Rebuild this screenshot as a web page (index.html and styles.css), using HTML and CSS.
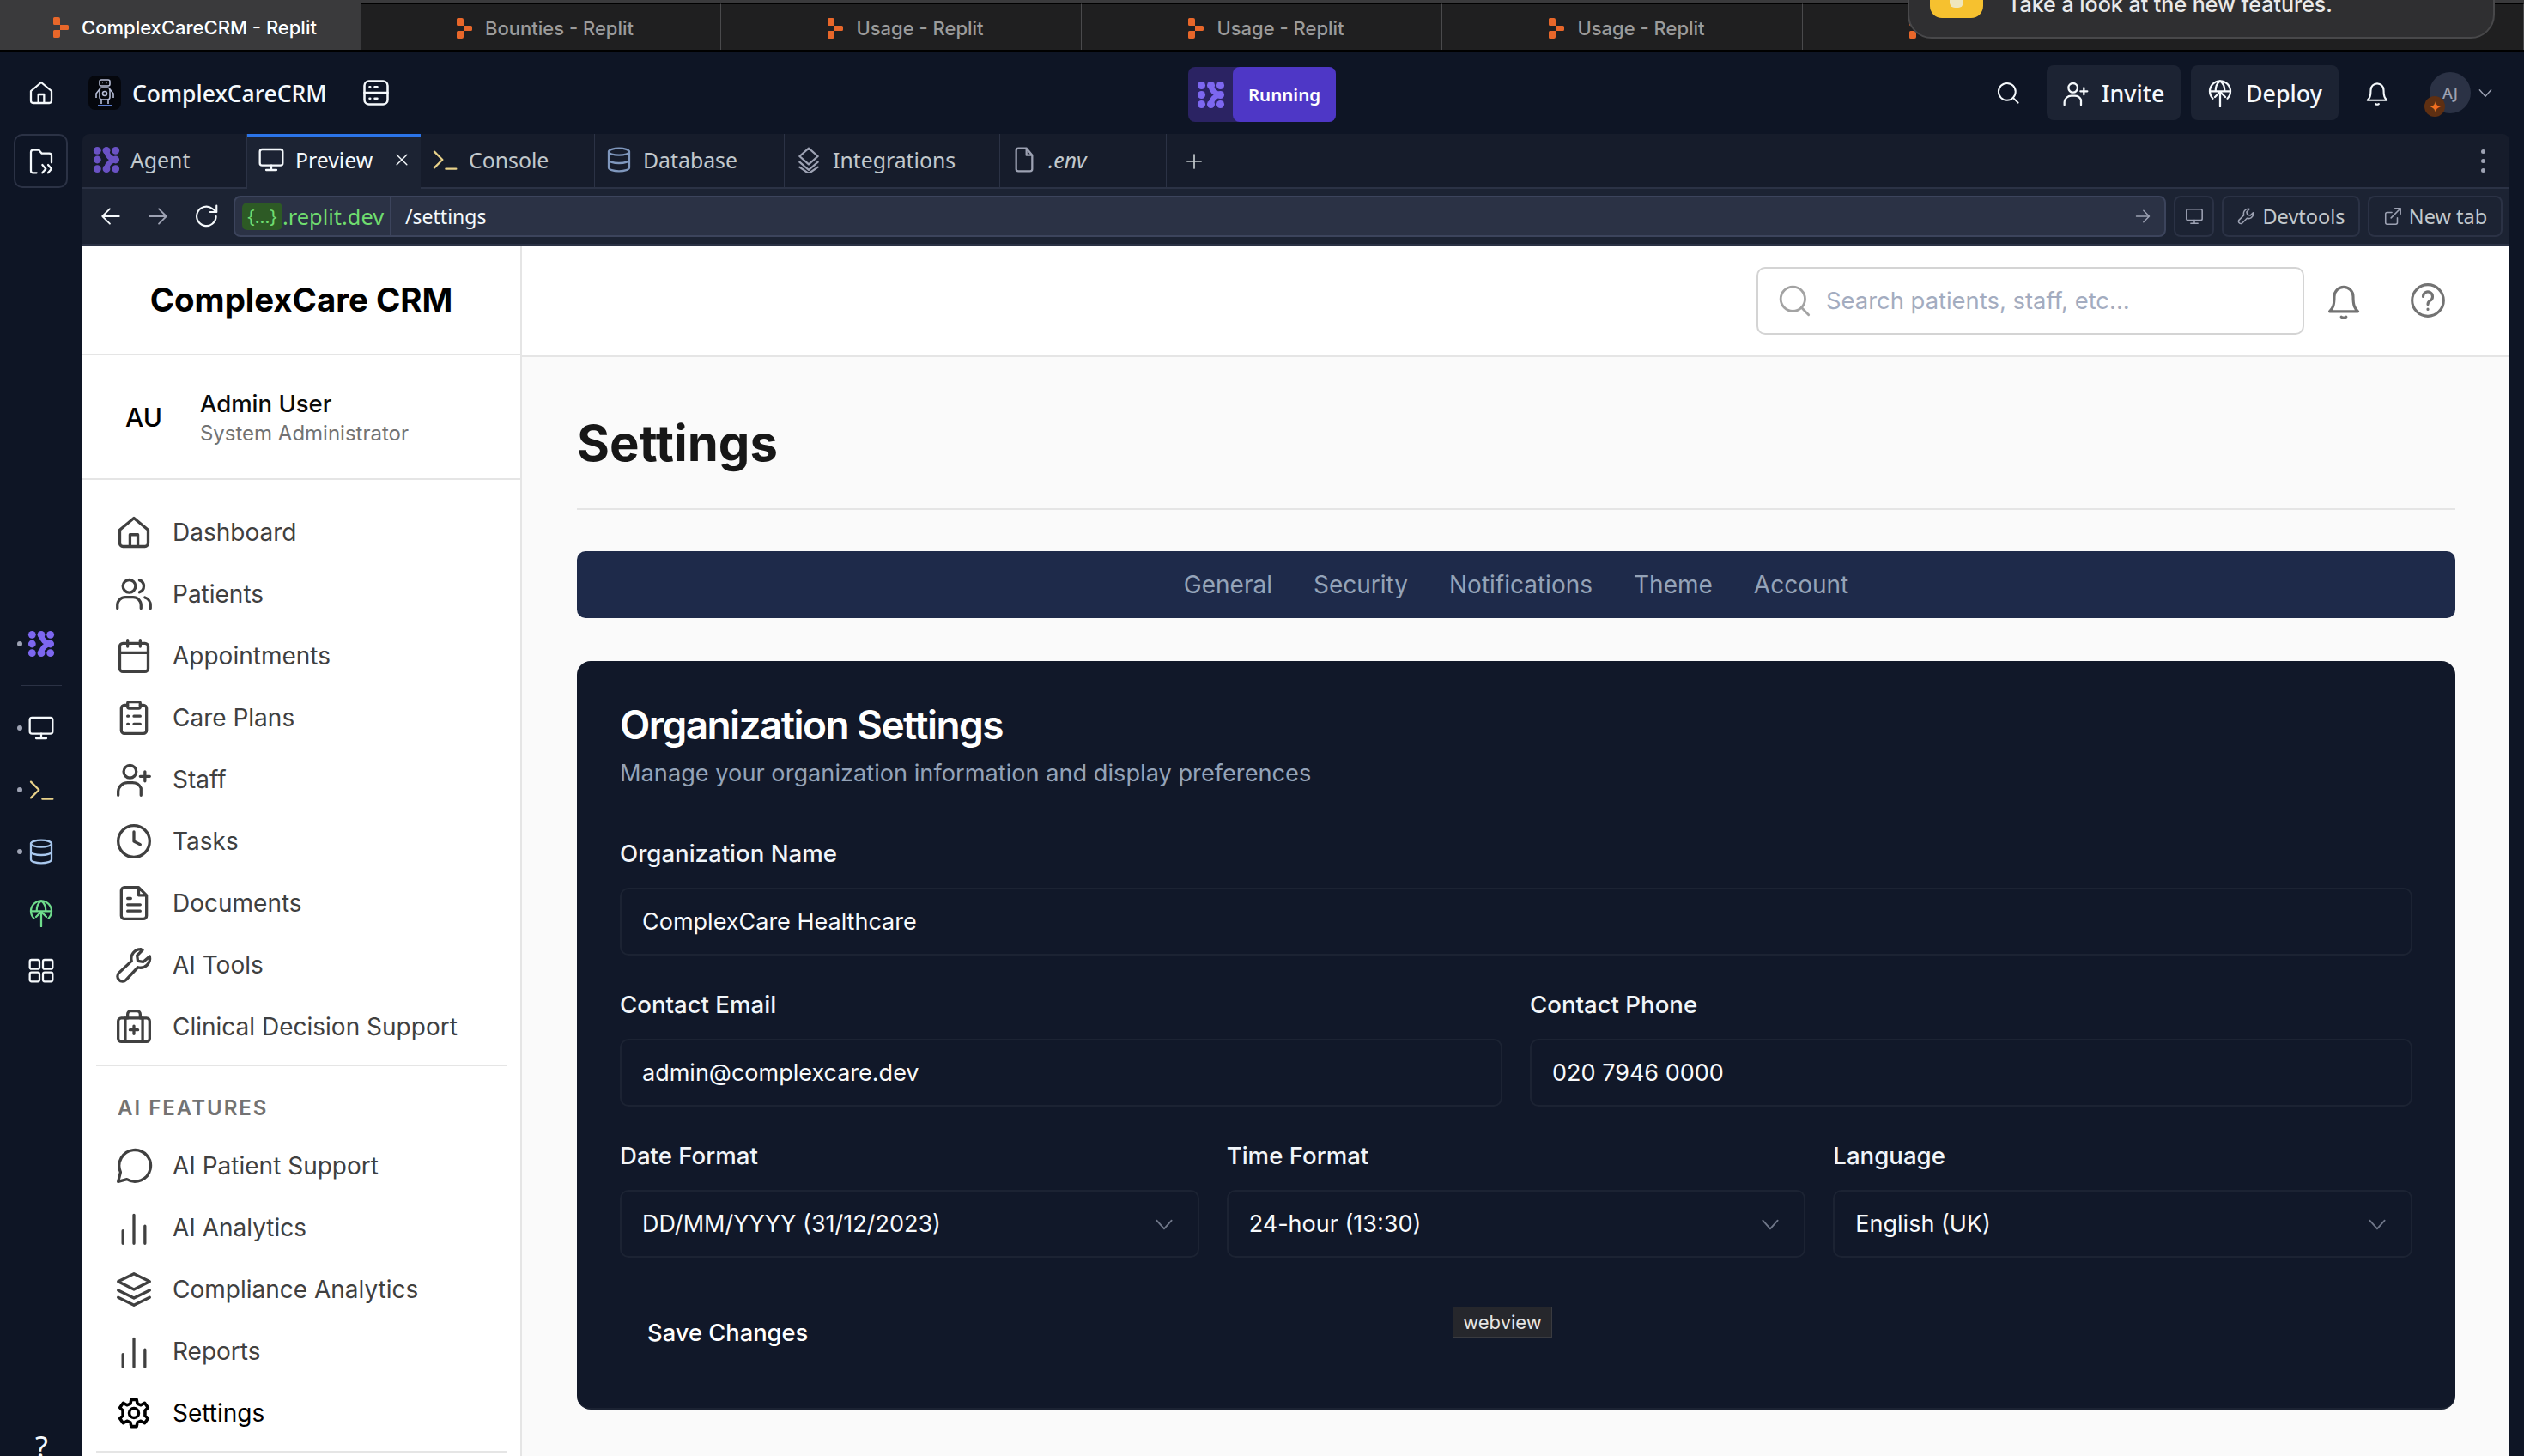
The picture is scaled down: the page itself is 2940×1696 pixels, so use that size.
FILE: index.html
```html
<!DOCTYPE html>
<html lang="en">
<head>
    <meta charset="UTF-8">
    <title>ComplexCareCRM - Replit</title>
    <link rel="stylesheet" href="styles.css">
</head>
<body>
    <svg class="sprite" width="0" height="0">
        <symbol id="i-replit" viewBox="0 0 20 24"><path fill="#e8672a" d="M1 1.500Q1 0 2.500 0H7q2 0 2 2v7H2.500Q1 9 1 7.500zM9 9h8.500Q19 9 19 10.500v3q0 1.500-1.500 1.500H9zM1 16.500Q1 15 2.500 15H9v7q0 2-2 2H2.500Q1 24 1 22.500z"/></symbol>
        <symbol id="i-agent" viewBox="0 0 24 24"><g fill="currentColor"><circle cx="4" cy="4" r="3.300"/><circle cx="12" cy="4" r="3.300"/><circle cx="20" cy="4" r="3.300"/><circle cx="4" cy="12" r="3.300"/><circle cx="20" cy="12" r="3.300"/><circle cx="4" cy="20" r="3.300"/><circle cx="12" cy="20" r="3.300"/><circle cx="20" cy="20" r="3.300"/></g><path fill="none" stroke="currentColor" stroke-width="4.600" stroke-linecap="round" d="M12 4C12.500 8 15 11 20 12 15 13 12.500 16 12 20"/></symbol>
        <symbol id="i-home" viewBox="0 0 24 24"><path d="M3 10.500 12 3l9 7.500V19a2 2 0 0 1-2 2H5a2 2 0 0 1-2-2zM9.500 21v-7.500h5V21"/></symbol>
        <symbol id="i-server" viewBox="0 0 24 24"><rect x="3" y="3" width="18" height="18" rx="3.500"/><path d="M3 12h18M7 7.500h.5M11 7.500h2M7 16.500h.5M11 16.500h2"/></symbol>
        <symbol id="i-search" viewBox="0 0 24 24"><circle cx="11" cy="11" r="8.500"/><path d="m17 17 5 5"/></symbol>
        <symbol id="i-invite" viewBox="0 0 24 24"><circle cx="9.500" cy="7" r="4"/><path d="M2 22v-2.500A6 6 0 0 1 8 14h3a6 6 0 0 1 5.500 3.500V22M19 7v6M16 10h6"/></symbol>
        <symbol id="i-deploy" viewBox="0 0 24 24"><path d="M5.600 16.300A9 9 0 1 1 18.400 16.300M3 10h18M12 1C9 3 8 6 8 10M12 1c3 2 4 5 4 9M12 23.500V10.500M7.500 15 12 10.500l4.500 4.500"/></symbol>
        <symbol id="i-bell" viewBox="0 0 24 24"><path d="M6 9.500a6 6 0 0 1 12 0c0 6 1 7.500 3 9.500H3c2-2 3-3.500 3-9.500zM10.500 22.500c1 .7 2 .7 3 0"/></symbol>
        <symbol id="i-files" viewBox="0 0 24 24"><path d="M8 22H5a2 2 0 0 1-2-2V4a2 2 0 0 1 2-2h5l2.500 3H19a2 2 0 0 1 2 2v6M13 15l3 3.500-3 3.500M18 15l3 3.500-3 3.500"/></symbol>
        <symbol id="i-monitor" viewBox="0 0 24 24"><rect x="2" y="3" width="20" height="14" rx="2"/><path d="M12 17v4M7.500 21h9"/></symbol>
        <symbol id="i-console" viewBox="0 0 24 24"><path stroke="#e9d28a" d="m3 5 7 7-7 7"/><path stroke="#e9d28a" d="M13 20h9"/></symbol>
        <symbol id="i-db" viewBox="0 0 24 24"><ellipse cx="12" cy="5" rx="9" ry="3"/><path d="M3 5v14c0 1.700 4 3 9 3s9-1.300 9-3V5M3 12c0 1.700 4 3 9 3s9-1.300 9-3"/></symbol>
        <symbol id="i-layers" viewBox="0 0 24 24"><path d="m12 2 8 7-8 7-8-7zM4 14l8 7 8-7M4 18.500l8 5.500 8-5.500"/></symbol>
        <symbol id="i-file" viewBox="0 0 24 24"><path d="M14 2H7a2 2 0 0 0-2 2v16a2 2 0 0 0 2 2h10a2 2 0 0 0 2-2V8zM14 2v6h5"/></symbol>
        <symbol id="i-plus" viewBox="0 0 24 24"><path d="M12 4v16M4 12h16"/></symbol>
        <symbol id="i-x" viewBox="0 0 24 24"><path d="m5 5 14 14M19 5 5 19"/></symbol>
        <symbol id="i-back" viewBox="0 0 24 24"><path d="M21 12H3M11 4l-8 8 8 8"/></symbol>
        <symbol id="i-next" viewBox="0 0 24 24"><path d="M3 12h18M13 4l8 8-8 8"/></symbol>
        <symbol id="i-reload" viewBox="0 0 24 24"><path d="M20.500 12A9 9 0 1 1 17 4.800L21 8M21 2v6h-6"/></symbol>
        <symbol id="i-wrench" viewBox="0 0 24 24"><path d="M15 2.500a6 6 0 0 0-5.500 8L3 17a3 3 0 0 0 4 4l6.500-6.500a6 6 0 0 0 8-5.500l-.3-1.500-3.700 3.500-3.500-1-1-3.500L16.500 2.700z"/></symbol>
        <symbol id="i-external" viewBox="0 0 24 24"><path d="M18 14v6a2 2 0 0 1-2 2H5a2 2 0 0 1-2-2V9a2 2 0 0 1 2-2h6M15 2h7v7M22 2 10 14"/></symbol>
        <symbol id="i-chevron" viewBox="0 0 24 24"><path d="m4 8 8 9 8-9"/></symbol>
        <symbol id="i-help" viewBox="0 0 24 24"><circle cx="12" cy="12" r="10"/><path d="M9 9.500a3 3 0 1 1 4.500 2.600c-1 .6-1.500 1.200-1.500 2.400M12 17.500v.2"/></symbol>
        <symbol id="i-users" viewBox="0 0 24 24"><circle cx="9" cy="7" r="4"/><path d="M1.500 21v-2a5 5 0 0 1 5-5h5a5 5 0 0 1 5 5v2M15.500 3.200a4 4 0 0 1 0 7.600M19 14.200a5 5 0 0 1 3.500 4.800v2"/></symbol>
        <symbol id="i-calendar" viewBox="0 0 24 24"><rect x="3" y="4" width="18" height="18" rx="2"/><path d="M3 10h18M8 2v4M16 2v4"/></symbol>
        <symbol id="i-clipboard" viewBox="0 0 24 24"><path d="M8 4H6a2 2 0 0 0-2 2v14a2 2 0 0 0 2 2h12a2 2 0 0 0 2-2V6a2 2 0 0 0-2-2h-2"/><rect x="8" y="2" width="8" height="4" rx="1"/><path d="M8 11h.5M8 16h.5M12 11h4M12 16h4"/></symbol>
        <symbol id="i-clock" viewBox="0 0 24 24"><circle cx="12" cy="12" r="10"/><path d="M12 6v6l4 2"/></symbol>
        <symbol id="i-doc" viewBox="0 0 24 24"><path d="M15 2H6a2 2 0 0 0-2 2v16a2 2 0 0 0 2 2h12a2 2 0 0 0 2-2V7zM15 2v5h5M8 9h2M8 13h8M8 17h8"/></symbol>
        <symbol id="i-tool" viewBox="0 0 24 24"><path d="M16.500 2a6 6 0 0 0-6 7.500L2.500 17a3 3 0 0 0 4.500 4.500l7.500-8a6 6 0 0 0 7.500-7l-4 3.500-3.500-.5-.5-3.500 3.500-3.500a6 6 0 0 0-1.500-.5z"/></symbol>
        <symbol id="i-case" viewBox="0 0 24 24"><rect x="2" y="6.500" width="20" height="15" rx="2"/><path d="M6.500 21.500v-15M17.500 21.500v-15M8 6.500V4a2 2 0 0 1 2-2h4a2 2 0 0 1 2 2v2.500M12 11.500v5M9.500 14h5"/></symbol>
        <symbol id="i-chat" viewBox="0 0 24 24"><path d="M3.500 16A10 10 0 1 1 7.500 20.500L2 22z"/></symbol>
        <symbol id="i-bars" viewBox="0 0 24 24"><path d="M5 22v-8M12 22V4M19 22V11"/></symbol>
        <symbol id="i-stack" viewBox="0 0 24 24"><path d="m12 2 10 5-10 5L2 7zM2 12.500 12 17.500l10-5M2 17l10 5 10-5"/></symbol>
        <symbol id="i-gear" viewBox="0 0 24 24"><g transform="translate(1.800 1.800) scale(.85)"><circle cx="12" cy="12" r="3.500"/><path d="M10 2h4l.6 3 2.600 1.100L20 4.500 22.500 8l-2.200 2.100v3.800l2.200 2.100L20 19.500l-2.800-1.600-2.600 1.100-.6 3h-4l-.6-3-2.600-1.100L4 19.500 1.500 16l2.200-2.100v-3.800L1.500 8 4 4.500l2.800 1.600L9.400 5z"/></g></symbol>
        <symbol id="i-grid" viewBox="0 0 24 24"><rect x="2" y="3" width="8.500" height="8" rx="1.500"/><rect x="13.500" y="3" width="8.500" height="8" rx="1.500"/><rect x="2" y="14" width="8.500" height="8" rx="1.500"/><rect x="13.500" y="14" width="8.500" height="8" rx="1.500"/></symbol>
    </svg>

    <div class="toast">
        <span class="toast-icon"><i class="toast-bulb"></i></span>
        <span>Take a look at the new features.</span>
    </div>

    <div class="browser-tabs">
        <div class="browser-tab active"><svg class="fav"><use href="#i-replit"/></svg>ComplexCareCRM - Replit</div>
        <div class="browser-tab"><svg class="fav"><use href="#i-replit"/></svg>Bounties - Replit</div>
        <div class="browser-tab"><svg class="fav"><use href="#i-replit"/></svg>Usage - Replit</div>
        <div class="browser-tab"><svg class="fav"><use href="#i-replit"/></svg>Usage - Replit</div>
        <div class="browser-tab"><svg class="fav"><use href="#i-replit"/></svg>Usage - Replit</div>
        <div class="browser-tab"><svg class="fav"><use href="#i-replit"/></svg>Usage - Replit</div>
        <div class="browser-tab"></div>
    </div>

    <header class="repl-top">
        <div class="repl-left">
            <svg class="ic home-ic"><use href="#i-home"/></svg>
            <span class="repl-avatar">
                <svg viewBox="0 0 38 40" width="38" height="40"><g fill="none" stroke="#b6bdd6" stroke-width="1.600"><rect x="13" y="5" width="12" height="7" rx="2"/><path d="M16 8.500h.5M21.500 8.500h.5"/><rect x="13" y="14" width="12" height="14" rx="3"/><circle cx="19" cy="21" r="2.500"/><path d="M13 16 9 21v5M25 16l4 5v5M15 28v5M23 28v5"/></g><path d="M11 35h16" stroke="#5f7fd0" stroke-width="2"/></svg>
            </span>
            <span class="repl-name">ComplexCareCRM</span>
            <svg class="ic server-ic"><use href="#i-server"/></svg>
        </div>
        <div class="run-btn">
            <span class="run-icon"><svg class="agent-ic"><use href="#i-agent"/></svg></span>
            <span class="run-label">Running</span>
        </div>
        <div class="repl-right">
            <svg class="ic top-search"><use href="#i-search"/></svg>
            <div class="top-btn invite"><svg class="ic"><use href="#i-invite"/></svg>Invite</div>
            <div class="top-btn deploy"><svg class="ic"><use href="#i-deploy"/></svg>Deploy</div>
            <svg class="ic top-bell"><use href="#i-bell"/></svg>
            <div class="aj">AJ<span class="aj-badge">&#10022;</span></div>
            <svg class="ic aj-chevron"><use href="#i-chevron"/></svg>
        </div>
    </header>

    <div class="workspace">
        <aside class="rail">
            <div class="rail-files"><svg class="ic"><use href="#i-files"/></svg></div>
            <div class="rail-tools">
                <div class="rail-item"><i class="rail-dot"></i><svg class="rail-agent"><use href="#i-agent"/></svg></div>
                <div class="rail-sep"></div>
                <div class="rail-item"><i class="rail-dot"></i><svg class="ic"><use href="#i-monitor"/></svg></div>
                <div class="rail-item"><i class="rail-dot"></i><svg class="ic"><use href="#i-console"/></svg></div>
                <div class="rail-item"><i class="rail-dot"></i><svg class="ic rail-db"><use href="#i-db"/></svg></div>
                <div class="rail-item"><svg class="ic rail-green"><use href="#i-deploy"/></svg></div>
                <div class="rail-item"><svg class="ic"><use href="#i-grid"/></svg></div>
            </div>
            <div class="rail-help">?</div>
        </aside>

        <div class="pane">
            <div class="pane-tabs">
                <div class="pane-tab w-agent"><svg class="agent-ic tab-agent"><use href="#i-agent"/></svg>Agent</div>
                <div class="pane-tab w-preview active"><svg class="ic"><use href="#i-monitor"/></svg>Preview<svg class="ic tab-x"><use href="#i-x"/></svg></div>
                <div class="pane-tab w-console"><svg class="ic"><use href="#i-console"/></svg>Console</div>
                <div class="pane-tab w-database"><svg class="ic tab-blue"><use href="#i-db"/></svg>Database</div>
                <div class="pane-tab w-integrations"><svg class="ic"><use href="#i-layers"/></svg>Integrations</div>
                <div class="pane-tab w-env"><svg class="ic"><use href="#i-file"/></svg><em>.env</em></div>
                <svg class="ic tab-plus"><use href="#i-plus"/></svg>
                <div class="kebab"><i></i><i></i><i></i></div>
            </div>

            <div class="url-row">
                <svg class="ic nav-ic"><use href="#i-back"/></svg>
                <svg class="ic nav-ic dim"><use href="#i-next"/></svg>
                <svg class="ic nav-ic reload-ic"><use href="#i-reload"/></svg>
                <div class="url-box">
                    <span class="url-host"><span class="url-chip">{...}</span>.replit.dev</span>
                    <span class="url-path">/settings</span>
                    <svg class="ic url-go"><use href="#i-next"/></svg>
                </div>
                <div class="url-btn url-btn-icon"><svg class="ic"><use href="#i-monitor"/></svg></div>
                <div class="url-btn url-btn-dev"><svg class="ic"><use href="#i-wrench"/></svg>Devtools</div>
                <div class="url-btn url-btn-new"><svg class="ic"><use href="#i-external"/></svg>New tab</div>
            </div>

            <div class="app">
                <nav class="sidebar">
                    <div class="brand">ComplexCare CRM</div>
                    <div class="user">
                        <div class="user-init">AU</div>
                        <div>
                            <div class="user-name">Admin User</div>
                            <div class="user-role">System Administrator</div>
                        </div>
                    </div>
                    <ul class="menu">
                        <li><svg class="ic"><use href="#i-home"/></svg>Dashboard</li>
                        <li><svg class="ic"><use href="#i-users"/></svg>Patients</li>
                        <li><svg class="ic"><use href="#i-calendar"/></svg>Appointments</li>
                        <li><svg class="ic"><use href="#i-clipboard"/></svg>Care Plans</li>
                        <li><svg class="ic"><use href="#i-invite"/></svg>Staff</li>
                        <li><svg class="ic"><use href="#i-clock"/></svg>Tasks</li>
                        <li><svg class="ic"><use href="#i-doc"/></svg>Documents</li>
                        <li><svg class="ic"><use href="#i-tool"/></svg>AI Tools</li>
                        <li><svg class="ic"><use href="#i-case"/></svg>Clinical Decision Support</li>
                    </ul>
                    <div class="menu-line"></div>
                    <div class="menu-title">AI FEATURES</div>
                    <ul class="menu menu-ai">
                        <li><svg class="ic"><use href="#i-chat"/></svg>AI Patient Support</li>
                        <li><svg class="ic"><use href="#i-bars"/></svg>AI Analytics</li>
                        <li><svg class="ic"><use href="#i-stack"/></svg>Compliance Analytics</li>
                        <li><svg class="ic"><use href="#i-bars"/></svg>Reports</li>
                        <li class="current"><svg class="ic"><use href="#i-gear"/></svg>Settings</li>
                    </ul>
                    <div class="menu-line"></div>
                </nav>

                <main class="main">
                    <div class="topbar">
                        <div class="search">
                            <svg class="ic"><use href="#i-search"/></svg>
                            <span>Search patients, staff, etc...</span>
                        </div>
                        <svg class="ic topbar-ic"><use href="#i-bell"/></svg>
                        <svg class="ic topbar-ic"><use href="#i-help"/></svg>
                    </div>

                    <div class="content">
                        <h1 class="page-title">Settings</h1>
                        <div class="settings-tabs">
                            <span>General</span>
                            <span>Security</span>
                            <span>Notifications</span>
                            <span>Theme</span>
                            <span>Account</span>
                        </div>

                        <section class="card">
                            <h2>Organization Settings</h2>
                            <p class="card-sub">Manage your organization information and display preferences</p>

                            <div class="field">
                                <label>Organization Name</label>
                                <div class="input">ComplexCare Healthcare</div>
                            </div>
                            <div class="row row-2">
                                <div class="field">
                                    <label>Contact Email</label>
                                    <div class="input">admin@complexcare.dev</div>
                                </div>
                                <div class="field">
                                    <label>Contact Phone</label>
                                    <div class="input">020 7946 0000</div>
                                </div>
                            </div>
                            <div class="row row-3">
                                <div class="field">
                                    <label>Date Format</label>
                                    <div class="input select">DD/MM/YYYY (31/12/2023)<svg class="ic"><use href="#i-chevron"/></svg></div>
                                </div>
                                <div class="field">
                                    <label>Time Format</label>
                                    <div class="input select">24-hour (13:30)<svg class="ic"><use href="#i-chevron"/></svg></div>
                                </div>
                                <div class="field">
                                    <label>Language</label>
                                    <div class="input select">English (UK)<svg class="ic"><use href="#i-chevron"/></svg></div>
                                </div>
                            </div>
                            <div class="save">Save Changes</div>
                        </section>
                    </div>
                </main>
            </div>
        </div>
    </div>

    <div class="webview-tip">webview</div>
</body>
</html>
```

FILE: styles.css
```css
*{
    margin: 0;
    padding: 0;
    box-sizing: border-box;
}
html,body{
    width: 2940px;
    height: 1696px;
    overflow: hidden;
}
body{
    position: relative;
    background: #0e1525;
    font-family: "Inter", "Liberation Sans", sans-serif;
    display: flex;
    flex-direction: column;
}
li{
    list-style: none;
}
.sprite{
    position: absolute;
}
.ic{
    fill: none;
    stroke: currentColor;
    stroke-width: 1.7;
    stroke-linecap: round;
    stroke-linejoin: round;
    flex: none;
}

/* browser tabs */
.browser-tabs{
    height: 60px;
    flex: none;
    display: flex;
    background: #1f1f20;
    border-top: 4px solid #3a3a3c;
    border-bottom: 2px solid #000;
}
.browser-tab{
    width: 420px;
    flex: none;
    display: flex;
    align-items: center;
    justify-content: center;
    padding: 2px 0 0 10px;
    border-right: 1px solid #4a4a4c;
    border-top: 1px solid #000;
    font: 500 22px "Inter", sans-serif;
    color: #9b9b9b;
}
.browser-tab.active{
    background: #3a3a3c;
    color: #fff;
    border-top: 0;
    border-right: 0;
}
.fav{
    width: 20px;
    height: 24px;
    margin-right: 14px;
}
.toast{
    position: absolute;
    left: 2222px;
    top: -45px;
    width: 684px;
    height: 90px;
    background: #2f2f31;
    border: 2px solid #48484a;
    border-radius: 28px;
    z-index: 5;
    display: flex;
    align-items: flex-end;
    gap: 28px;
    padding: 0 0 23px 24px;
    font: 500 25px "Inter", sans-serif;
    color: #e9e9e9;
}
.toast-icon{
    width: 62px;
    height: 40px;
    margin-bottom: -1px;
    background: #f6c12f;
    border-radius: 0 0 14px 14px;
    flex: none;
    display: flex;
    justify-content: center;
}
.toast-bulb{
    width: 16px;
    height: 32px;
    margin-top: -4px;
    background: #efe6bd;
    border-radius: 0 0 6px 6px;
}

/* replit top bar */
.repl-top{
    height: 96px;
    flex: none;
    display: flex;
    align-items: center;
    justify-content: space-between;
    position: relative;
    padding: 0 35px 0 32px;
    color: #f5f9fc;
}
.repl-left,.repl-right{
    display: flex;
    align-items: center;
}
.home-ic{
    width: 32px;
    height: 32px;
}
.repl-avatar{
    width: 38px;
    height: 40px;
    margin-left: 39px;
    background: #05070d;
    border-radius: 8px;
}
.repl-name{
    margin: 2px 0 0 13px;
    font: 500 26.500px "Noto Sans", sans-serif;
}
.server-ic{
    width: 36px;
    height: 36px;
    margin-left: 39px;
}
.run-btn{
    position: absolute;
    left: 1384px;
    top: 18px;
    width: 172px;
    height: 64px;
    display: flex;
    background: #2b2363;
    border-radius: 8px;
}
.run-icon{
    width: 52px;
    display: flex;
    align-items: center;
    justify-content: center;
}
.agent-ic{
    width: 33px;
    height: 33px;
    color: #7d67f0;
}
.run-label{
    flex: 1;
    background: #4e37c6;
    border-radius: 8px;
    color: #fff;
    font: 600 20.500px/64px "Noto Sans", sans-serif;
    text-align: center;
}
.top-search{
    width: 28px;
    height: 28px;
    margin-right: 31px;
}
.top-btn{
    height: 64px;
    display: flex;
    align-items: center;
    gap: 14px;
    padding-top: 1px;
    background: #1c2333;
    border-radius: 8px;
    font: 500 26.800px "Noto Sans", sans-serif;
}
.top-btn .ic{
    width: 32px;
    height: 32px;
}
.invite{
    width: 156px;
    padding-left: 18px;
    margin-right: 12px;
}
.deploy{
    width: 172px;
    padding-left: 18px;
    margin-right: 30px;
}
.top-bell{
    width: 30px;
    height: 32px;
    margin-right: 46px;
}
.aj{
    position: relative;
    width: 48px;
    height: 48px;
    border-radius: 50%;
    background: #2b3245;
    color: #9da2b3;
    font: 500 18px/48px "Noto Sans", sans-serif;
    text-align: center;
}
.aj-badge{
    position: absolute;
    left: -6px;
    bottom: -4px;
    width: 24px;
    height: 24px;
    background: #5e2f12;
    border-radius: 50%;
    color: #f26f21;
    font-size: 18px;
    line-height: 24px;
}
.aj-chevron{
    width: 20px;
    height: 20px;
    margin-left: 7px;
    color: #9da2b3;
}

/* workspace */
.workspace{
    flex: 1;
    min-height: 0;
    display: flex;
}
.rail{
    width: 96px;
    flex: none;
    position: relative;
    color: #f5f9fc;
}
.rail-files{
    width: 63px;
    height: 63px;
    margin-left: 16px;
    border: 2px solid #2b3245;
    border-radius: 10px;
    display: flex;
    align-items: center;
    justify-content: center;
}
.rail-files .ic{
    width: 32px;
    height: 32px;
}
.rail-tools{
    margin-top: 495px;
}
.rail-item{
    height: 72px;
    position: relative;
    display: flex;
    align-items: center;
    justify-content: center;
}
.rail-item:last-child{
    height: 60px;
}
.rail-item .ic{
    width: 32px;
    height: 32px;
}
.rail-dot{
    position: absolute;
    left: 20px;
    top: 33px;
    width: 6px;
    height: 6px;
    border-radius: 50%;
    background: #9da2b3;
}
.rail-agent{
    width: 32px;
    height: 32px;
    color: #7d67f0;
}
.rail-sep{
    width: 48px;
    height: 1px;
    margin: 12px 24px 13px;
    background: #2b3245;
}
.rail-db{
    color: #a9c8ee;
}
.rail-green{
    color: #6fdc8c;
}
.rail-help{
    position: absolute;
    left: 41px;
    top: 1506px;
    font: 400 34px "Noto Sans", sans-serif;
}

.pane{
    width: 2827px;
    flex: none;
    display: flex;
    flex-direction: column;
}
.pane-tabs{
    height: 64px;
    flex: none;
    display: flex;
    background: #161c2b;
    border-bottom: 2px solid #2b3245;
    border-radius: 8px 8px 0 0;
    align-items: stretch;
    font: 400 24.800px "Noto Sans", sans-serif;
    color: #c2c8cc;
}
.pane-tab{
    display: flex;
    align-items: center;
    gap: 12px;
    padding: 0 0 2px 12px;
    border-right: 1px solid #2b3245;
}
.pane-tab .ic{
    width: 32px;
    height: 32px;
    color: #9da2b3;
}
.pane-tab em{
    font-style: italic;
}
.tab-agent{
    width: 32px;
    height: 32px;
    color: #6a52c4;
}
.w-agent{ width: 192px; }
.w-preview{ width: 202px; }
.w-console{ width: 203px; }
.w-database{ width: 221px; }
.w-integrations{ width: 251px; }
.w-env{ width: 194px; }
.pane-tab.active{
    background: #1c2333;
    color: #f5f9fc;
    border-top: 3px solid #2b74e8;
    margin-bottom: -2px;
    padding-bottom: 7px;
    border-right: 0;
}
.pane-tab.active .ic{
    color: #f5f9fc;
}
.pane-tab .tab-x{
    width: 20px;
    height: 20px;
    margin-left: 12px;
    color: #9da2b3;
}
.pane-tab .tab-blue{
    color: #7f97bd;
}
.tab-plus{
    width: 24px;
    height: 24px;
    margin: 20px 0 0 20px;
    color: #c2c8cc;
}
.kebab{
    margin-left: auto;
    margin-right: 28px;
    display: flex;
    flex-direction: column;
    justify-content: center;
    gap: 6px;
}
.kebab i{
    width: 5px;
    height: 5px;
    border-radius: 50%;
    background: #9da2b3;
}

.url-row{
    height: 66px;
    flex: none;
    display: flex;
    align-items: center;
    background: #1c2333;
    padding: 0 7px 0 20px;
    border-bottom: 2px solid #2b3245;
    font: 400 23.500px "Noto Sans", sans-serif;
    color: #f5f9fc;
}
.nav-ic{
    width: 26px;
    height: 26px;
    margin-right: 29px;
}
.nav-ic.dim{
    color: #9da2b3;
}
.nav-ic.reload-ic{
    width: 30px;
    height: 30px;
    margin-right: 16px;
}
.url-box{
    width: 2251px;
    height: 48px;
    flex: none;
    display: flex;
    align-items: center;
    background: #2b3245;
    border: 2px solid #3c445c;
    border-radius: 8px;
    padding-left: 8px;
}
.url-host{
    height: 100%;
    display: flex;
    align-items: center;
    width: 174px;
    border-right: 2px solid #3c445c;
    color: #6fdc6f;
    font-size: 25.400px;
}
.url-chip{
    width: 47px;
    flex: none;
    background: #2d5a25;
    border-radius: 6px;
    height: 32px;
    line-height: 30px;
    text-align: center;
    font-size: 22px;
}
.url-path{
    margin-left: 16px;
    font-size: 23px;
}
.url-go{
    width: 20px;
    height: 20px;
    margin-left: auto;
    margin-right: 15px;
    color: #9da2b3;
}
.url-btn{
    height: 48px;
    display: flex;
    align-items: center;
    justify-content: center;
    gap: 8px;
    margin-left: 9px;
    border: 2px solid #2b3245;
    border-radius: 8px;
    color: #c2c8cc;
}
.url-btn .ic{
    width: 22px;
    height: 22px;
    color: #9da2b3;
}
.url-btn-icon{ width: 47px; }
.url-btn-dev{ width: 161px; }
.url-btn-new{ width: 157px; }

/* crm app */
.app{
    flex: 1;
    min-height: 0;
    display: flex;
    background: #fff;
    overflow: hidden;
}
.sidebar{
    width: 512px;
    flex: none;
    background: #fff;
    border-right: 2px solid #e5e5e5;
}
.brand{
    height: 128px;
    border-bottom: 2px solid #e5e5e5;
    display: flex;
    align-items: center;
    justify-content: center;
    font-size: 38.400px;
    font-weight: 700;
    color: #000;
}
.user{
    height: 145px;
    border-bottom: 2px solid #e5e5e5;
    display: flex;
    align-items: center;
    gap: 44px;
    padding-left: 50px;
}
.user-init{
    font-size: 30px;
    font-weight: 500;
    color: #000;
}
.user-name{
    font-size: 27.500px;
    font-weight: 500;
    color: #0a0a0a;
}
.user-role{
    font-size: 24px;
    color: #737373;
    margin-top: 3px;
}
.menu{
    padding: 25px 0 0 38px;
}
.menu li{
    height: 72px;
    display: flex;
    align-items: center;
    gap: 23px;
    font-size: 28px;
    color: #404040;
}
.menu li .ic{
    width: 44px;
    height: 44px;
    stroke-width: 1.800;
}
.menu li.current{
    color: #000;
}
.menu li.current .ic{
    stroke-width: 2.300;
}
.menu-line{
    height: 2px;
    margin: 8px 16px 0;
    background: #e5e5e5;
}
.menu-title{
    padding: 34px 0 0 41px;
    font-size: 24px;
    font-weight: 600;
    letter-spacing: 2px;
    color: #737373;
}
.menu-ai{
    padding-top: 17px;
}

.main{
    flex: 1;
    min-width: 0;
    background: #fafafa;
}
.topbar{
    height: 130px;
    background: #fff;
    border-bottom: 2px solid #e5e5e5;
    display: flex;
    align-items: center;
    justify-content: flex-end;
    padding-right: 73px;
    gap: 54px;
}
.search{
    width: 638px;
    height: 79px;
    border: 2px solid #d4d4d4;
    border-radius: 10px;
    display: flex;
    align-items: center;
    gap: 17px;
    padding-left: 22px;
    margin-right: -30px;
    font-size: 27.400px;
    color: #a3acc0;
}
.search .ic{
    width: 40px;
    height: 40px;
    color: #a3a3a3;
}
.topbar-ic{
    width: 44px;
    height: 44px;
    color: #737373;
}
.content{
    padding: 0 63px 0 64px;
}
.page-title{
    height: 178px;
    border-bottom: 2px solid #e5e5e5;
    display: flex;
    align-items: center;
    font-size: 58px;
    font-weight: 700;
    color: #171717;
    padding-top: 24px;
}
.settings-tabs{
    height: 78px;
    margin-top: 48px;
    background: #1e2a4a;
    border-radius: 10px;
    display: flex;
    align-items: center;
    justify-content: center;
    gap: 48px;
    font-size: 28px;
    color: #94a3b8;
}
.card{
    margin-top: 50px;
    height: 872px;
    background: #111829;
    border-bottom: 2px solid #1c2333;
    border-radius: 16px;
    padding: 46px 50px 0 50px;
    color: #fff;
}
.card h2{
    font-size: 46px;
    font-weight: 600;
    letter-spacing: -1.570px;
    line-height: 56px;
}
.card-sub{
    margin-top: 11px;
    font-size: 27.200px;
    line-height: 36px;
    color: #94a3b8;
}
.field{
    min-width: 0;
}
.field label{
    display: block;
    font-size: 27.600px;
    font-weight: 500;
    line-height: 36px;
    margin-bottom: 22px;
    color: #f1f5f9;
}
.card-sub + .field{
    margin-top: 57px;
}
.input{
    height: 79px;
    border: 2px solid #1c2333;
    border-radius: 10px;
    display: flex;
    align-items: center;
    padding-left: 24px;
    font-size: 27px;
    color: #f8fafc;
}
.row{
    display: grid;
    gap: 32px;
    margin-top: 39px;
}
.row-2{
    grid-template-columns: 1fr 1fr;
}
.row-3{
    grid-template-columns: 1fr 1fr 1fr;
}
.select{
    justify-content: space-between;
    padding-right: 26px;
}
.select .ic{
    width: 26px;
    height: 26px;
    color: #71788a;
}
.save{
    margin-top: 70px;
    padding-left: 32px;
    font-size: 27.300px;
    font-weight: 500;
    line-height: 36px;
}
.webview-tip{
    position: absolute;
    left: 1692px;
    top: 1522px;
    width: 116px;
    height: 36px;
    background: #26272c;
    border: 1px solid #3a3b40;
    color: #e5e5e5;
    font: 400 22px/34px "Inter", sans-serif;
    text-align: center;
}
```
